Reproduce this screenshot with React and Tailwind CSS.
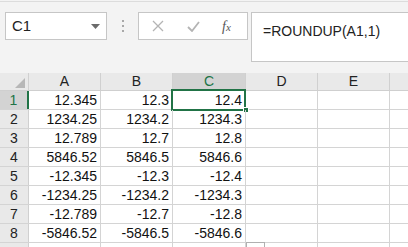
const cols = ["A", "B", "C", "D", "E"];

const rows = [
  ["12.345", "12.3", "12.4"],
  ["1234.25", "1234.2", "1234.3"],
  ["12.789", "12.7", "12.8"],
  ["5846.52", "5846.5", "5846.6"],
  ["-12.345", "-12.3", "-12.4"],
  ["-1234.25", "-1234.2", "-1234.3"],
  ["-12.789", "-12.7", "-12.8"],
  ["-5846.52", "-5846.5", "-5846.6"],
];

const widths = ["w-[72px]", "w-[72px]", "w-[73px]", "w-[72px]", "w-[72px]"];

const App = () => {
  return (
    <div
      className="w-[408px] h-[247px] overflow-hidden bg-[#f3f3f3] relative"
      style={{ fontFamily: '"Liberation Sans", Arial, sans-serif' }}
    >
      {/* Formula bar */}
      <div className="h-[72px] border-t border-[#dcdcdc] mt-[1px] flex items-start pt-[10px] pl-[5px]">
        <div className="w-[102px] h-[28px] bg-white border border-[#c6c6c6] flex items-center justify-between pl-[6px] pr-[6px]">
          <span className="text-[15px] text-[#222]">C1</span>
          <svg width="9" height="5" viewBox="0 0 9 5">
            <polygon points="0,0 9,0 4.5,5" fill="#6b6b6b" />
          </svg>
        </div>
        <div className="w-[31px] h-[28px] flex flex-col items-center justify-center gap-[3px]">
          <span className="w-[2px] h-[2px] bg-[#a8a8a8]" />
          <span className="w-[2px] h-[2px] bg-[#a8a8a8]" />
          <span className="w-[2px] h-[2px] bg-[#a8a8a8]" />
        </div>
        <div className="w-[110px] h-[28px] bg-white border border-[#c6c6c6] flex items-center">
          <svg width="12" height="12" viewBox="0 0 12 12" className="ml-[13px]">
            <path d="M1 1 L11 11 M11 1 L1 11" stroke="#b4b4b4" strokeWidth="1.3" />
          </svg>
          <svg width="13" height="11" viewBox="0 0 13 11" className="ml-[23px]">
            <path d="M1 6 L5 10 L12 1" stroke="#b4b4b4" strokeWidth="1.8" fill="none" />
          </svg>
          <span
            className="ml-[22px] text-[14px] italic text-[#555]"
            style={{ fontFamily: '"Liberation Serif", "Times New Roman", serif' }}
          >
            f<span className="text-[11px]">x</span>
          </span>
        </div>
        <div className="ml-[3px] flex-1 h-[50px] bg-white border border-[#c6c6c6] border-r-0 pl-[11px] pt-[6px]">
          <span className="text-[14px] text-[#222]">=ROUNDUP(A1,1)</span>
        </div>
      </div>

      {/* Column headers */}
      <div className="flex h-[18px] bg-[#e9e9e9] border-b border-[#cfcfcf]">
        <div className="w-[29px] border-r border-[#d0d0d0] flex items-end justify-end pr-[3px] pb-[2px]">
          <svg width="10" height="10" viewBox="0 0 10 10">
            <polygon points="10,0 10,10 0,10" fill="#b7b7b7" />
          </svg>
        </div>
        {cols.map((c) => (
          <div
            key={c}
            className={`${c === "C" ? "w-[73px] bg-[#d3d3d3] text-[#217346]" : "w-[72px] text-[#222]"} border-r border-[#d0d0d0] flex items-center justify-center text-[14px]`}
          >
            {c}
          </div>
        ))}
        <div className="flex-1" />
      </div>

      {/* Rows */}
      {rows.map((r, i) => (
        <div key={i} className="flex h-[19px] bg-white border-b border-[#d4d4d4]">
          <div
            className={`w-[29px] flex items-center justify-center text-[14px] ${
              i === 0
                ? "bg-[#d3d3d3] text-[#217346] border-r-2 border-[#217346]"
                : "bg-[#e9e9e9] text-[#222] border-r border-[#d0d0d0]"
            }`}
          >
            {i + 1}
          </div>
          {widths.map((w, j) => (
            <div
              key={j}
              className={`${w} relative border-r border-[#d4d4d4] flex items-center justify-end pr-[3px] text-[14px] text-[#111]`}
            >
              {r[j] ?? ""}
              {i === 0 && j === 2 && (
                <>
                  <div className="absolute left-[-2px] top-[-2px] right-[-1px] bottom-[-2px] border-2 border-[#217346]" />
                  <div className="absolute right-[-4px] bottom-[-4px] w-[6px] h-[6px] bg-[#217346] border border-white" />
                </>
              )}
            </div>
          ))}
          <div className="flex-1" />
        </div>
      ))}
      <div className="flex h-[19px] bg-white">
        <div className="w-[29px] bg-[#e9e9e9] border-r border-[#d0d0d0]" />
        {widths.map((w, j) => (
          <div key={j} className={`${w} border-r border-[#d4d4d4]`} />
        ))}
      </div>
      <div className="absolute left-[246px] top-[242px] w-[19px] h-[10px] border border-[#b0b0b0] bg-white" />
    </div>
  );
};

export default App;
